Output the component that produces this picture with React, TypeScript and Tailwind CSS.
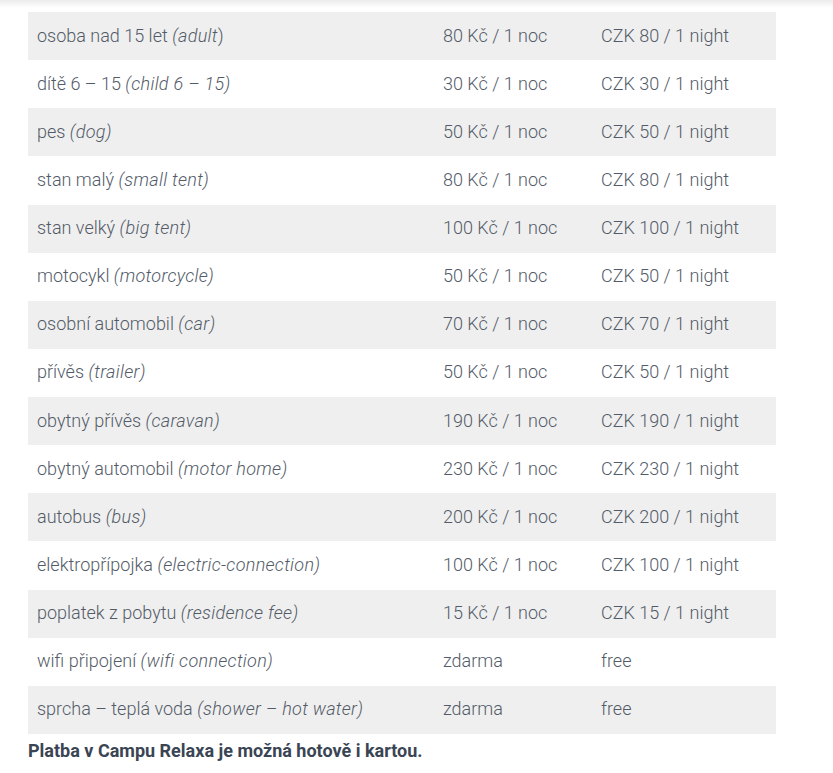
const rows: [string, string, string, string][] = [
  ["osoba nad 15 let", "adult", "80 Kč / 1 noc", "CZK 80 / 1 night"],
  ["dítě 6 – 15", "child 6 – 15", "30 Kč / 1 noc", "CZK 30 / 1 night"],
  ["pes", "dog", "50 Kč / 1 noc", "CZK 50 / 1 night"],
  ["stan malý", "small tent", "80 Kč / 1 noc", "CZK 80 / 1 night"],
  ["stan velký", "big tent", "100 Kč / 1 noc", "CZK 100 / 1 night"],
  ["motocykl", "motorcycle", "50 Kč / 1 noc", "CZK 50 / 1 night"],
  ["osobní automobil", "car", "70 Kč / 1 noc", "CZK 70 / 1 night"],
  ["přívěs", "trailer", "50 Kč / 1 noc", "CZK 50 / 1 night"],
  ["obytný přívěs", "caravan", "190 Kč / 1 noc", "CZK 190 / 1 night"],
  ["obytný automobil", "motor home", "230 Kč / 1 noc", "CZK 230 / 1 night"],
  ["autobus", "bus", "200 Kč / 1 noc", "CZK 200 / 1 night"],
  ["elektropřípojka", "electric-connection", "100 Kč / 1 noc", "CZK 100 / 1 night"],
  ["poplatek z pobytu", "residence fee", "15 Kč / 1 noc", "CZK 15 / 1 night"],
  ["wifi připojení", "wifi connection", "zdarma", "free"],
  ["sprcha – teplá voda", "shower – hot water", "zdarma", "free"],
];

export default function App() {
  return (
    <div className="min-h-[773px] bg-white font-['Roboto',sans-serif]">
      {/* header shadow */}
      <div className="h-[8px] bg-gradient-to-b from-[#ececec] to-white" />
      <div className="px-[28px] pt-[4px]">
        <table className="w-[748px] border-collapse text-[18px] font-light text-[#535b68]">
          <tbody>
            {rows.map(([cz, en, czk, eng], i) => (
              <tr key={i} className={i % 2 === 0 ? "h-[48.13px] bg-[#efefef]" : "h-[48.13px] bg-white"}>
                <td className="w-[406px] pb-[2px] pl-[9px] align-middle">
                  {cz}{" "}
                  {i === 0 ? (
                    <>
                      <em className="italic tracking-[0.3px]">(adult</em>)
                    </>
                  ) : (
                    <em className="italic tracking-[0.3px]">({en})</em>
                  )}
                </td>
                <td className="w-[158px] pb-[2px] pl-[9px] align-middle">{czk}</td>
                <td className="pb-[2px] pl-[9px] align-middle">{eng}</td>
              </tr>
            ))}
          </tbody>
        </table>
        <p className="mt-[3px] text-[18px] font-bold text-[#3a4554]">
          Platba v Campu Relaxa je možná hotově i kartou.
        </p>
      </div>
    </div>
  );
}
